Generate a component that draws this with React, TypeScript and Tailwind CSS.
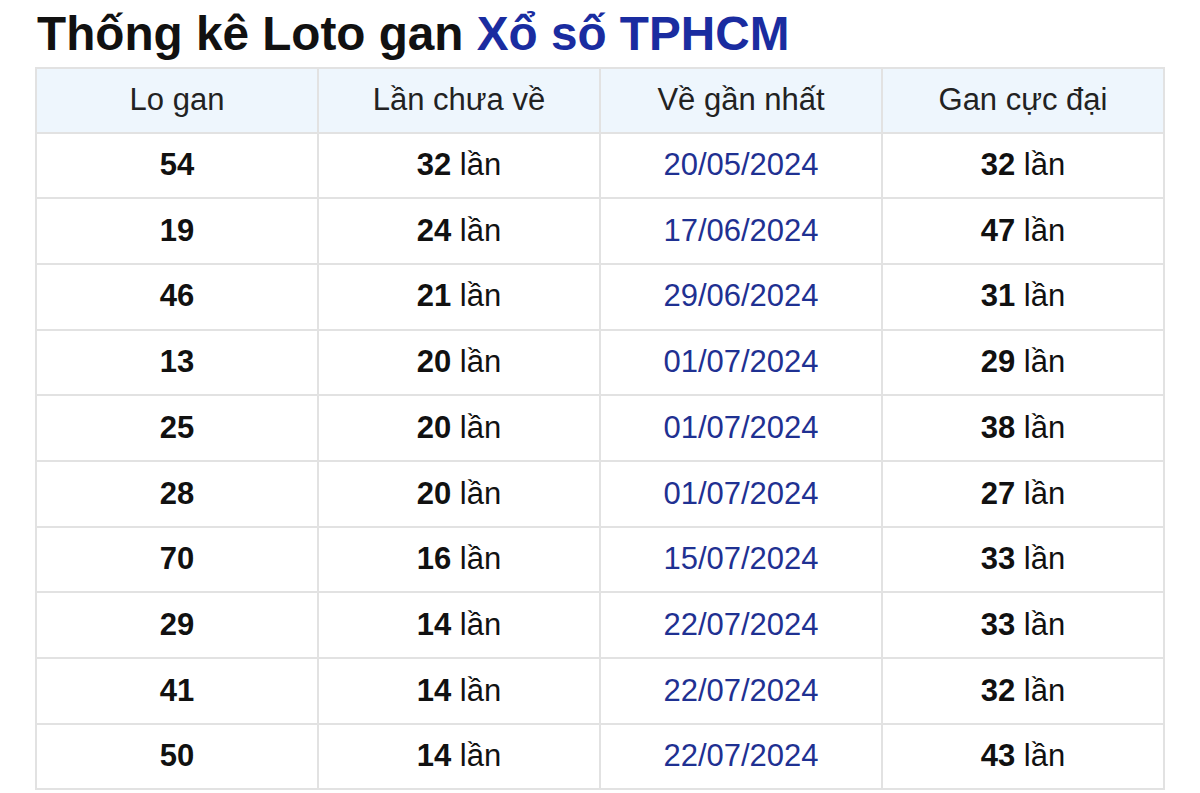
import React from "react";

const rows: [string, string, string, string][] = [
  ["54", "32", "20/05/2024", "32"],
  ["19", "24", "17/06/2024", "47"],
  ["46", "21", "29/06/2024", "31"],
  ["13", "20", "01/07/2024", "29"],
  ["25", "20", "01/07/2024", "38"],
  ["28", "20", "01/07/2024", "27"],
  ["70", "16", "15/07/2024", "33"],
  ["29", "14", "22/07/2024", "33"],
  ["41", "14", "22/07/2024", "32"],
  ["50", "14", "22/07/2024", "43"],
];

export default function App() {
  return (
    <div
      className="w-[1200px] h-[793px] bg-white overflow-hidden"
      style={{ fontFamily: '"Liberation Sans", Arial, sans-serif' }}
    >
      <h1 className="pl-[37px] pt-[6px] h-[67px] text-[47.7px] leading-[56px] font-bold text-[#111]">
        Thống kê Loto gan <span className="text-[#1a2ca0]">Xổ số TPHCM</span>
      </h1>
      <table className="ml-[35px] w-[1130px] border-collapse table-fixed text-[31px] text-[#222]">
        <thead>
          <tr className="h-[64.5px] bg-[#eef6fd]">
            {["Lo gan", "Lần chưa về", "Về gần nhất", "Gan cực đại"].map((h) => (
              <th key={h} className="border-2 border-[#e2e2e2] font-normal text-center">
                {h}
              </th>
            ))}
          </tr>
        </thead>
        <tbody>
          {rows.map((r, i) => (
            <tr key={i} className="h-[65.7px]">
              <td className="border-2 border-[#e2e2e2] text-center font-bold text-[#111]">{r[0]}</td>
              <td className="border-2 border-[#e2e2e2] text-center text-[#111]">
                <b>{r[1]}</b> lần
              </td>
              <td className="border-2 border-[#e2e2e2] text-center text-[#1f3192]">{r[2]}</td>
              <td className="border-2 border-[#e2e2e2] text-center text-[#111]">
                <b>{r[3]}</b> lần
              </td>
            </tr>
          ))}
        </tbody>
      </table>
    </div>
  );
}
